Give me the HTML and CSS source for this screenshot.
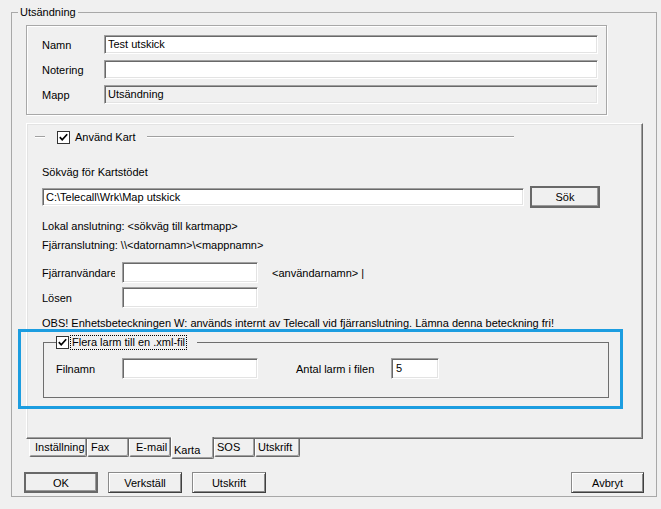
FILE: index.html
```html
<!DOCTYPE html>
<html>
<head>
<meta charset="utf-8">
<link rel="stylesheet" href="styles.css">
</head>
<body>
<fieldset class="outer">
  <legend class="legend">Utsändning</legend>
  <div class="info">
    <div class="frow"><span class="flabel">Namn</span><div class="tb">Test utskick</div></div>
    <div class="frow"><span class="flabel">Notering</span><div class="tb"></div></div>
    <div class="frow"><span class="flabel">Mapp</span><div class="tb ro">Utsändning</div></div>
  </div>
  <div class="panel">
    <div class="hdr">
      <span class="etch short"></span>
      <span class="cb"><svg width="11" height="11" viewBox="0 0 11 11"><polyline points="1.8,5.2 4.2,7.8 9.2,2.2" fill="none" stroke="#000" stroke-width="1.7"/></svg></span>
      <span class="hdr-text">Använd Kart</span>
      <span class="etch long"></span>
    </div>
    <div class="txt t1">Sökväg för Kartstödet</div>
    <div class="pathrow">
      <div class="tb path">C:\Telecall\Wrk\Map utskick</div>
      <div class="btn strong sok">Sök</div>
    </div>
    <div class="txt t2">Lokal anslutning: &lt;sökväg till kartmapp&gt;</div>
    <div class="txt t3">Fjärranslutning: \\&lt;datornamn&gt;\&lt;mappnamn&gt;</div>
    <div class="urow">
      <span class="ulabel">Fjärranvändare</span>
      <div class="tb w136"></div>
      <span class="hint">&lt;användarnamn&gt; |</span>
    </div>
    <div class="urow r2">
      <span class="ulabel">Lösen</span>
      <div class="tb w136"></div>
    </div>
    <div class="txt t4">OBS! Enhetsbeteckningen W: används internt av Telecall vid fjärranslutning. Lämna denna beteckning fri!</div>
    <fieldset class="xml">
      <legend class="xlegend"><span class="lg">
        <span class="cb"><svg width="11" height="11" viewBox="0 0 11 11"><polyline points="1.8,5.2 4.2,7.8 9.2,2.2" fill="none" stroke="#000" stroke-width="1.7"/></svg></span>
        <span class="focus">Flera larm till en .xml-fil</span>
      </span></legend>
      <div class="xrow">
        <span class="xlabel">Filnamn</span>
        <div class="tb w136"></div>
        <span class="alabel">Antal larm i filen</span>
        <div class="tb w48 num">5</div>
      </div>
    </fieldset>
  </div>
  <div class="tabs">
    <div class="tab t-inst">Inställning</div>
    <div class="tab t-fax">Fax</div>
    <div class="tab t-mail">E-mail</div>
    <div class="tab sel t-karta">Karta</div>
    <div class="tab t-sos">SOS</div>
    <div class="tab t-utsk">Utskrift</div>
  </div>
  <div class="buttons">
    <div class="btn strong">OK</div>
    <div class="btn gap">Verkställ</div>
    <div class="btn gap">Utskrift</div>
    <div class="btn push">Avbryt</div>
  </div>
</fieldset>
<div class="highlight"></div>
</body>
</html>
```
FILE: styles.css
```css
* { box-sizing: border-box; }
html, body { margin: 0; padding: 0; }
body {
  width: 661px;
  height: 509px;
  background: #f0f0f0;
  font-family: "Liberation Sans", Arial, sans-serif;
  font-size: 11px;
  color: #000;
  position: relative;
  overflow: hidden;
}
.outer {
  margin: 5px 4px 0 11px;
  padding: 0 0 3px 0;
  border: 1px solid #a8a8a8;
  min-width: 0;
}
.legend {
  padding: 0 2px;
  margin-left: 6px;
  line-height: 14px;
}
.info {
  margin: 6px 49px 0 14px;
  height: 90px;
  border: 1px solid #a8a8a8;
  box-shadow: inset 1px 1px 0 #fff, 1px 1px 0 #fff;
  padding: 9px 8px 0 15px;
  display: flex;
  flex-direction: column;
  gap: 6px;
}
.frow { display: flex; align-items: center; height: 19px; }
.flabel { width: 62px; white-space: nowrap; }
.tb {
  flex: 1;
  height: 19px;
  background: #fff;
  border: 1px solid;
  border-color: #a0a0a0 #fff #fff #a0a0a0;
  box-shadow: inset 1px 1px 0 #696969, inset -1px -1px 0 #e3e3e3;
  padding: 0 3px;
  line-height: 17px;
  white-space: nowrap;
  overflow: hidden;
}
.tb.ro { background: #f0f0f0; }
.panel {
  margin: 8px 0 0 14px;
  width: 617px;
  height: 316px;
  border: 1px solid;
  border-color: #fff #696969 #696969 #fff;
  box-shadow: inset -1px -1px 0 #a0a0a0, inset 1px 1px 0 #e3e3e3;
  padding: 0 0 0 15px;
}
.hdr {
  display: flex;
  align-items: center;
  height: 14px;
  margin: 6px 0 0 -7px;
}
.etch {
  height: 2px;
  border-top: 1px solid #a0a0a0;
  border-bottom: 1px solid #fff;
  flex: none;
}
.etch.short { width: 10px; margin-right: 12px; }
.etch.long { width: 367px; margin-left: 11px; }
.cb {
  width: 13px;
  height: 13px;
  border: 1px solid #333;
  background: #fff;
  display: inline-flex;
  flex: none;
}
.cb svg { display: block; }
.hdr-text { margin-left: 5px; white-space: nowrap; }
.txt { line-height: 14px; white-space: nowrap; }
.t1 { margin-top: 21px; }
.pathrow {
  display: flex;
  align-items: center;
  margin-top: 7px;
  height: 22px;
}
.tb.path { flex: none; width: 482px; height: 18px; line-height: 16px; }
.btn {
  width: 74px;
  height: 21px;
  display: flex;
  align-items: center;
  justify-content: center;
  background: #f0f0f0;
  border: 1px solid;
  border-color: #8a8a8a #404040 #404040 #8a8a8a;
  box-shadow: inset 1px 1px 0 #fff, inset -1px -1px 0 #8a8a8a;
  flex: none;
}
.btn.strong {
  border: 2px solid #696969;
  box-shadow: inset -1px -1px 0 #9a9a9a;
}
.sok { width: 70px; height: 22px; margin-left: 6px; }
.t2 { margin-top: 11px; }
.t3 { margin-top: 5px; }
.urow {
  display: flex;
  align-items: center;
  margin-top: 10px;
  height: 21px;
}
.urow.r2 { margin-top: 4px; }
.ulabel { width: 73px; margin-right: 7px; overflow: hidden; white-space: nowrap; flex: none; }
.tb.w136 { flex: none; width: 136px; height: 21px; }
.hint { margin-left: 14px; white-space: nowrap; }
.t4 { margin-top: 8px; }
.xml {
  margin: 5px 33px 0 1px;
  padding: 9px 0 18px 0;
  border: 1px solid #6e6e6e;
  min-width: 0;
}
.xlegend {
  padding: 0;
  margin-left: 12px;
  width: 141px;
  height: 14px;
  line-height: 14px;
}
.lg { display: flex; align-items: center; height: 14px; }
.focus {
  margin-left: 2px;
  outline: 1px dotted #000;
  padding: 0 1px;
  line-height: 13px;
  white-space: nowrap;
}
.xrow {
  display: flex;
  align-items: center;
  height: 21px;
  padding-left: 12px;
}
.xlabel { width: 66px; flex: none; }
.alabel { margin-left: 38px; width: 95px; flex: none; white-space: nowrap; }
.tb.w48 { flex: none; width: 48px; height: 21px; }
.tb.num { padding-left: 4px; line-height: 19px; }
.tabs {
  display: flex;
  align-items: flex-start;
  margin-left: 17px;
  height: 20px;
}
.tab {
  height: 18px;
  border-left: 1px solid #fff;
  border-right: 1px solid #696969;
  border-bottom: 1px solid #696969;
  box-shadow: inset -1px -1px 0 #a0a0a0;
  border-radius: 0 0 2px 2px;
  line-height: 16px;
  white-space: nowrap;
  flex: none;
}
.tab.sel {
  margin-top: -2px;
  height: 22px;
  background: #f0f0f0;
  padding-top: 5px;
}
.t-inst { width: 58px; padding-left: 5px; }
.t-fax { width: 42px; padding-left: 3px; }
.t-mail { width: 42px; padding-left: 6px; }
.t-karta { width: 43px; padding-left: 2px; }
.t-sos { width: 41px; padding-left: 2px; }
.t-utsk { width: 45px; padding-left: 2px; }
.buttons {
  display: flex;
  margin: 13px 12px 0 12px;
  height: 21px;
}
.btn.gap { margin-left: 10px; }
.btn.push { margin-left: auto; width: 73px; }
.highlight {
  position: absolute;
  left: 18px;
  top: 329px;
  width: 605px;
  height: 80px;
  border: 3px solid #1c9de0;
}
```
